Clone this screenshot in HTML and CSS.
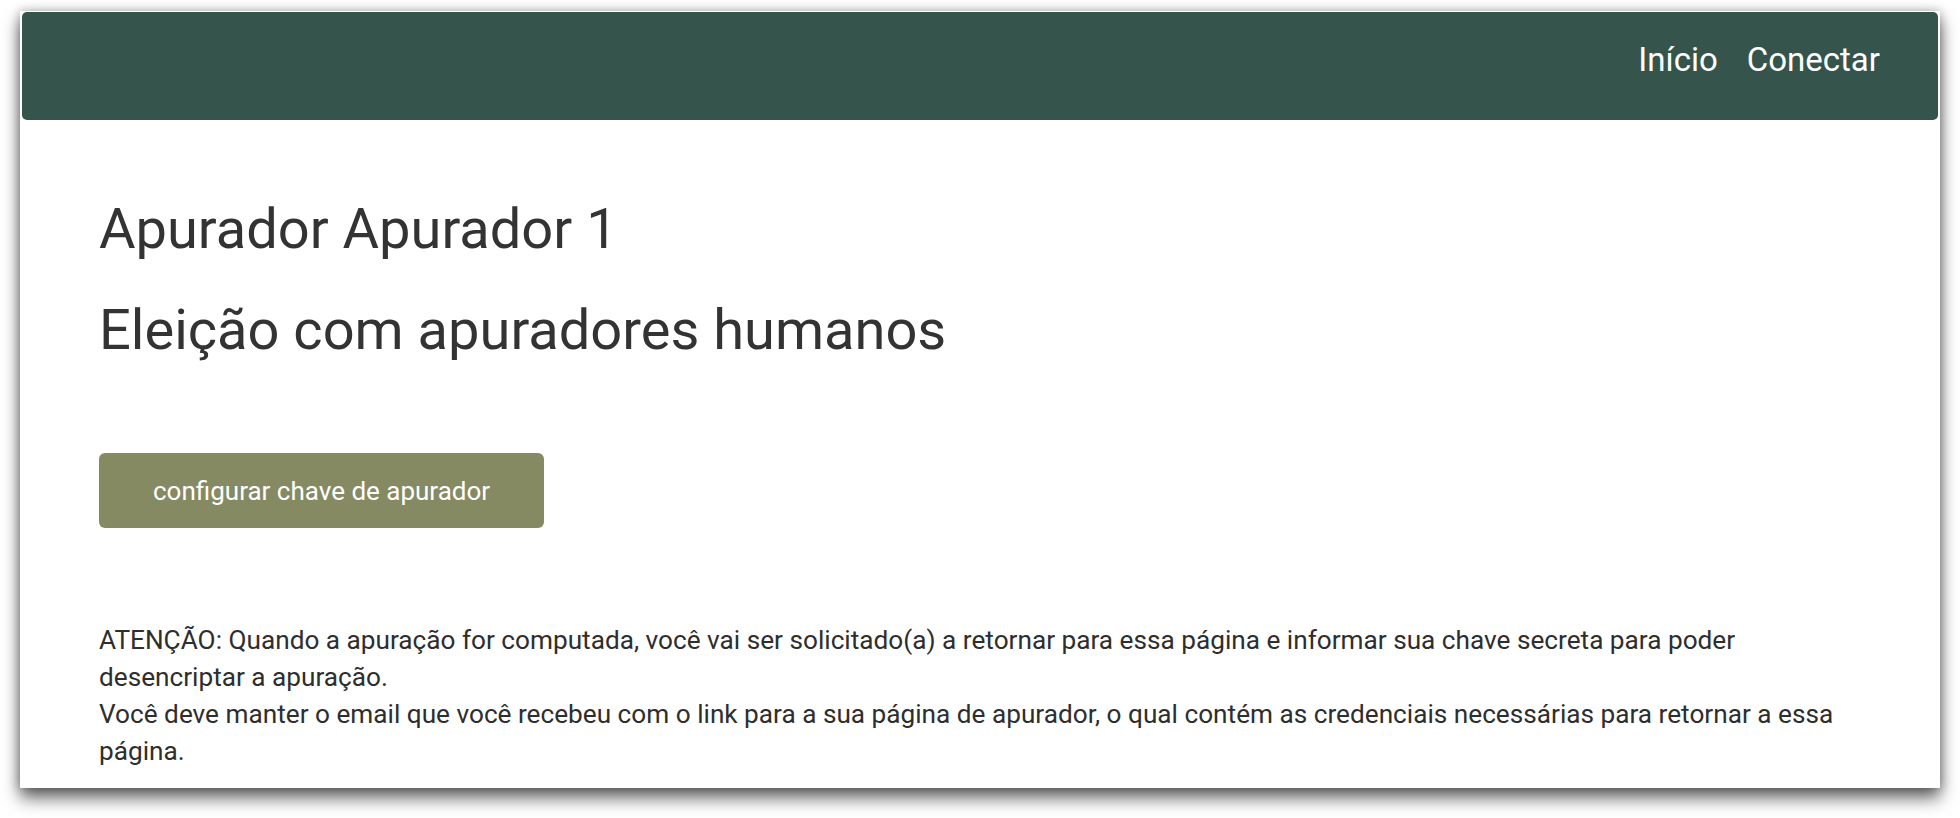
FILE: index.html
```html
<!DOCTYPE html>
<html lang="pt-BR">
<head>
<meta charset="utf-8">
<title>Apurador Apurador 1</title>
<link rel="stylesheet" href="styles.css">
</head>
<body>
<div class="window">
  <nav class="navbar">
    <a class="nav-link" href="#">Início</a>
    <a class="nav-link" href="#">Conectar</a>
  </nav>
  <main class="content">
    <h1 class="title">Apurador Apurador 1</h1>
    <h2 class="subtitle">Eleição com apuradores humanos</h2>
    <div class="actions">
      <button class="btn" type="button">configurar chave de apurador</button>
    </div>
    <p class="notice">ATENÇÃO: Quando a apuração for computada, você vai ser solicitado(a) a retornar para essa página e informar sua chave secreta para poder desencriptar a apuração.<br>Você deve manter o email que você recebeu com o link para a sua página de apurador, o qual contém as credenciais necessárias para retornar a essa página.</p>
  </main>
</div>
</body>
</html>
```

FILE: styles.css
```css
html, body {
  margin: 0;
  padding: 0;
  background: #ffffff;
}

body {
  font-family: Roboto, "Liberation Sans", Arial, sans-serif;
  color: #333333;
  overflow: hidden;
  height: 818px;
}

.window {
  margin: 11px 20px 0;
  height: 777px;
  background: #ffffff;
  box-shadow: 0 10px 16px rgba(0, 0, 0, 0.6), 0 0 10px rgba(0, 0, 0, 0.28);
  overflow: hidden;
  padding: 1px 2px 0;
  box-sizing: border-box;
}

.navbar {
  height: 108px;
  background: #34544c;
  border-radius: 5px;
  display: flex;
  justify-content: flex-end;
  align-items: flex-start;
  gap: 29px;
  padding: 28px 58px 0 0;
  box-sizing: border-box;
}

.nav-link {
  color: #ffffff;
  text-decoration: none;
  font-size: 33px;
  line-height: 40px;
}

.content {
  padding: 0 77px;
}

.title,
.subtitle {
  font-size: 56px;
  font-weight: 400;
  line-height: 67px;
  margin: 0;
  color: #333333;
}

.title {
  margin-top: 76px;
}

.subtitle {
  margin-top: 34px;
}

.actions {
  margin-top: 89px;
}

.btn {
  display: inline-flex;
  align-items: center;
  justify-content: center;
  height: 75px;
  padding: 0 54px;
  border: none;
  border-radius: 6px;
  background: #858a63;
  color: #ffffff;
  font-family: Roboto, "Liberation Sans", Arial, sans-serif;
  font-size: 26px;
  cursor: pointer;
}

.notice {
  margin: 94px 0 0;
  font-size: 26.2px;
  line-height: 37px;
  color: #2e2e2e;
}
```
